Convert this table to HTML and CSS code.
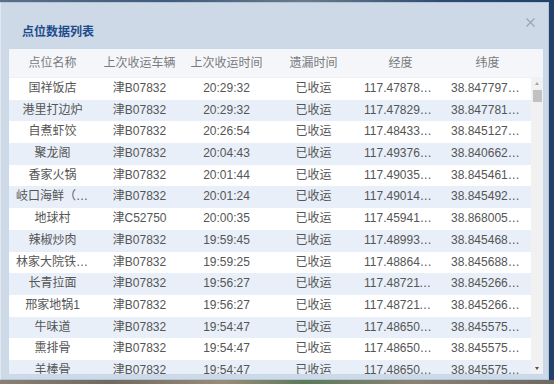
FILE: index.html
```html
<!DOCTYPE html>
<html lang="zh-CN">
<head>
<meta charset="utf-8">
<title>点位数据列表</title>
<link rel="stylesheet" href="styles.css">
</head>
<body>
<div class="screen">
  <div class="dialog">
    <div class="dialog-head">
      <div class="title">点位数据列表</div>
      <button class="close" aria-label="关闭">
        <svg width="9" height="9" viewBox="0 0 9 9"><path d="M0.5 0.5 L8.5 8.5 M8.5 0.5 L0.5 8.5" stroke="#9aa3ad" stroke-width="1.1" fill="none"/></svg>
      </button>
    </div>
    <div class="grid">
      <div class="grid-head">
        <div class="c">点位名称</div>
        <div class="c">上次收运车辆</div>
        <div class="c">上次收运时间</div>
        <div class="c">遗漏时间</div>
        <div class="c">经度</div>
        <div class="c">纬度</div>
        <div class="pad"></div>
      </div>
      <div class="grid-body">
        <div class="rows">
          <div class="row"><div class="c">国祥饭店</div><div class="c">津B07832</div><div class="c">20:29:32</div><div class="c">已收运</div><div class="c">117.4787812345</div><div class="c">38.8477971234</div></div>
          <div class="row"><div class="c">港里打边炉</div><div class="c">津B07832</div><div class="c">20:29:32</div><div class="c">已收运</div><div class="c">117.4782934512</div><div class="c">38.8477812356</div></div>
          <div class="row"><div class="c">自煮虾饺</div><div class="c">津B07832</div><div class="c">20:26:54</div><div class="c">已收运</div><div class="c">117.4843321478</div><div class="c">38.8451273491</div></div>
          <div class="row"><div class="c">聚龙阁</div><div class="c">津B07832</div><div class="c">20:04:43</div><div class="c">已收运</div><div class="c">117.4937645123</div><div class="c">38.8406624789</div></div>
          <div class="row"><div class="c">香家火锅</div><div class="c">津B07832</div><div class="c">20:01:44</div><div class="c">已收运</div><div class="c">117.4903512874</div><div class="c">38.8454617532</div></div>
          <div class="row"><div class="c">岐口海鲜（北塘店）</div><div class="c">津B07832</div><div class="c">20:01:24</div><div class="c">已收运</div><div class="c">117.4901433219</div><div class="c">38.8454925673</div></div>
          <div class="row"><div class="c">地球村</div><div class="c">津C52750</div><div class="c">20:00:35</div><div class="c">已收运</div><div class="c">117.4594156732</div><div class="c">38.8680054218</div></div>
          <div class="row"><div class="c">辣椒炒肉</div><div class="c">津B07832</div><div class="c">19:59:45</div><div class="c">已收运</div><div class="c">117.4899367145</div><div class="c">38.8454682391</div></div>
          <div class="row"><div class="c">林家大院铁锅炖</div><div class="c">津B07832</div><div class="c">19:59:25</div><div class="c">已收运</div><div class="c">117.4886421587</div><div class="c">38.8456883624</div></div>
          <div class="row"><div class="c">长青拉面</div><div class="c">津B07832</div><div class="c">19:56:27</div><div class="c">已收运</div><div class="c">117.4872118463</div><div class="c">38.8452661845</div></div>
          <div class="row"><div class="c">邢家地锅1</div><div class="c">津B07832</div><div class="c">19:56:27</div><div class="c">已收运</div><div class="c">117.4872118463</div><div class="c">38.8452661845</div></div>
          <div class="row"><div class="c">牛味道</div><div class="c">津B07832</div><div class="c">19:54:47</div><div class="c">已收运</div><div class="c">117.4865023871</div><div class="c">38.8455752169</div></div>
          <div class="row"><div class="c">熏排骨</div><div class="c">津B07832</div><div class="c">19:54:47</div><div class="c">已收运</div><div class="c">117.4865023871</div><div class="c">38.8455752169</div></div>
          <div class="row"><div class="c">羊棒骨</div><div class="c">津B07832</div><div class="c">19:54:47</div><div class="c">已收运</div><div class="c">117.4865023871</div><div class="c">38.8455752169</div></div>
        </div>
        <div class="scrollbar">
          <div class="arrow up"></div>
          <div class="track"><div class="thumb"></div></div>
          <div class="arrow down"></div>
        </div>
      </div>
    </div>
  </div>
  <div class="map-bottom"></div>
</div>
</body>
</html>
```

FILE: styles.css
```css
html, body {
  margin: 0;
  padding: 0;
}
body {
  width: 554px;
  height: 384px;
  overflow: hidden;
  background: #21406a;
  font-family: "Liberation Sans", "Noto Sans CJK SC", sans-serif;
}
.screen {
  width: 554px;
  height: 384px;
  padding-top: 2px;
  box-sizing: border-box;
  background: linear-gradient(90deg, #5b6f86 0, #3f5a7c 30%, #6b7a8a 55%, #2c4a72 80%, #21406a 100%) top / 100% 2px no-repeat, #21406a;
}
.dialog {
  width: 549px;
  height: 378px;
  box-sizing: border-box;
  background: #cdd9e7;
  border: 1px solid #b5c5d8;
  border-left-color: #dfe7f0;
  display: flex;
  flex-direction: column;
}
.dialog-head {
  height: 45px;
  display: flex;
  justify-content: space-between;
  align-items: flex-start;
  padding: 0 13px 0 21px;
  flex: none;
}
.title {
  margin-top: 21px;
  font-size: 12px;
  line-height: 16px;
  font-weight: bold;
  color: #1d4c8d;
}
.close {
  margin-top: 15px;
  width: 9px;
  height: 9px;
  padding: 0;
  border: 0;
  background: transparent;
  display: block;
}
.close svg {
  display: block;
}
.grid {
  margin-left: 7px;
  width: 536px;
  height: 327px;
  box-sizing: border-box;
  border: 1px solid #c9d9ec;
  background: #ffffff;
  display: flex;
  flex-direction: column;
  overflow: hidden;
  font-size: 12px;
}
.grid-head {
  height: 29px;
  flex: none;
  display: flex;
  background: #f4f6fa;
  color: #7a7a7a;
  line-height: 29px;
  border-bottom: 1px solid #eef1f5;
  box-sizing: border-box;
}
.grid-head .pad {
  width: 12px;
  flex: none;
}
.c {
  width: 87px;
  flex: none;
  box-sizing: border-box;
  padding: 0 7px;
  text-align: center;
  white-space: nowrap;
  overflow: hidden;
  text-overflow: ellipsis;
}
.grid-body {
  flex: 1;
  display: flex;
  min-height: 0;
}
.rows {
  width: 522px;
  flex: none;
  overflow: hidden;
  color: #555555;
}
.row {
  display: flex;
  height: 21.7px;
  line-height: 21.7px;
  background: #ffffff;
}
.row:nth-child(even) {
  background: #e8eff8;
}
.scrollbar {
  width: 12px;
  flex: none;
  background: #f1f1f1;
  display: flex;
  flex-direction: column;
}
.arrow {
  height: 11px;
  flex: none;
  position: relative;
}
.arrow::after {
  content: "";
  position: absolute;
  left: 4px;
  width: 0;
  height: 0;
  border-left: 2.5px solid transparent;
  border-right: 2.5px solid transparent;
}
.arrow.up::after {
  top: 4px;
  border-bottom: 3px solid #a3a3a3;
}
.arrow.down::after {
  top: 4px;
  border-top: 3px solid #505050;
}
.track {
  flex: 1;
  padding: 1px 1px 0 2px;
}
.thumb {
  height: 12px;
  background: #c1c1c1;
}
.map-bottom {
  height: 4px;
  background: linear-gradient(90deg, #8a7f72 0, #6f6a60 20%, #9a8b78 40%, #5b7b5a 55%, #8b8275 75%, #6d6a63 100%);
}
```
